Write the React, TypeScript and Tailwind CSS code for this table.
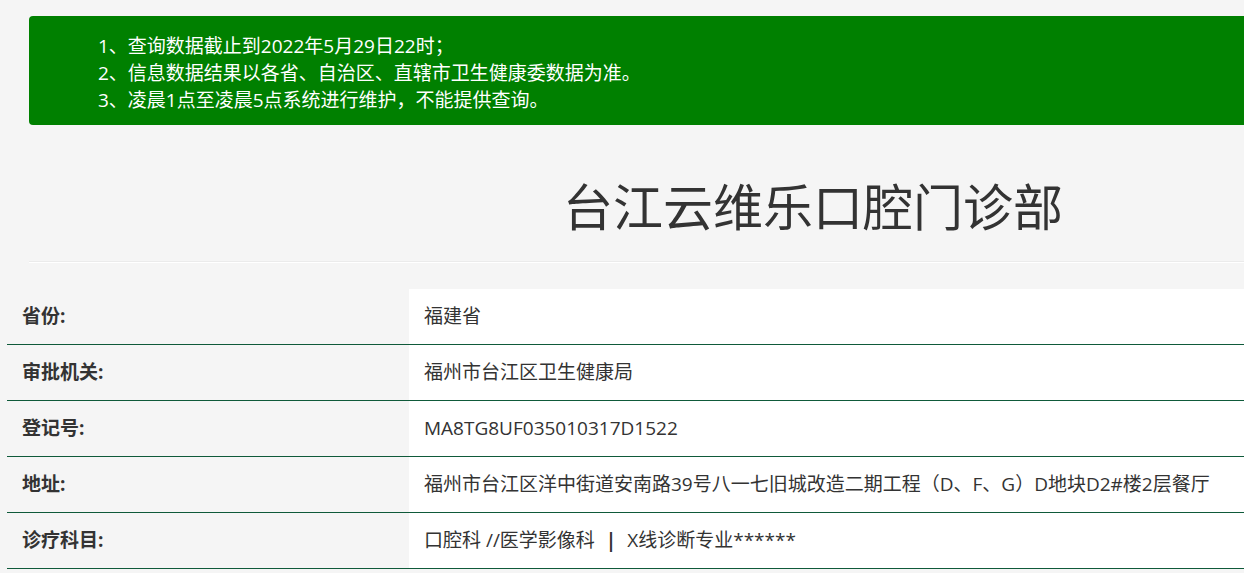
import React from "react";

const rows: [string, React.ReactNode][] = [
  ["省份:", "福建省"],
  ["审批机关:", "福州市台江区卫生健康局"],
  ["登记号:", "MA8TG8UF035010317D1522"],
  ["地址:", "福州市台江区洋中街道安南路39号八一七旧城改造二期工程（D、F、G）D地块D2#楼2层餐厅"],
  [
    "诊疗科目:",
    <>
      口腔科 //医学影像科 <span className="mx-[6px] font-bold">|</span> X线诊断专业******
    </>,
  ],
];

export default function App() {
  return (
    <div
      className="min-h-[573px] w-full overflow-hidden bg-[#f5f5f5] text-[#333]"
      style={{ fontFamily: '"Open Sans", "Noto Sans CJK SC", sans-serif' }}
    >
      <div className="pt-[16px] pl-[29px]">
        <div className="-mr-[20px] h-[109px] rounded-[4px] bg-[#008000] pl-[69px] pt-[17px] text-[19px] leading-[27px] text-white">
          <div>1、查询数据截止到2022年5月29日22时；</div>
          <div>2、信息数据结果以各省、自治区、直辖市卫生健康委数据为准。</div>
          <div>3、凌晨1点至凌晨5点系统进行维护，不能提供查询。</div>
        </div>
      </div>

      <div className="flex h-[136px] items-center justify-center pl-[382px] pt-[28px]">
        <h1 className="text-[50px] font-normal leading-none text-[#333]">
          台江云维乐口腔门诊部
        </h1>
      </div>

      <div className="ml-[29px] border-t border-[#ebebeb] border-b border-b-white" />

      <div className="mt-[26px] pl-[7px]">
        {rows.map(([label, value], i) => (
          <div key={i} className="flex h-[56px] border-b border-[#0f5a3a]">
            <div className="flex w-[402px] shrink-0 items-center pl-[15px] text-[19px] font-bold text-[#333]">
              {label}
            </div>
            <div className="flex flex-1 items-center whitespace-pre bg-white pl-[15px] text-[19px] text-[#333]">
              {value}
            </div>
          </div>
        ))}
      </div>
    </div>
  );
}
